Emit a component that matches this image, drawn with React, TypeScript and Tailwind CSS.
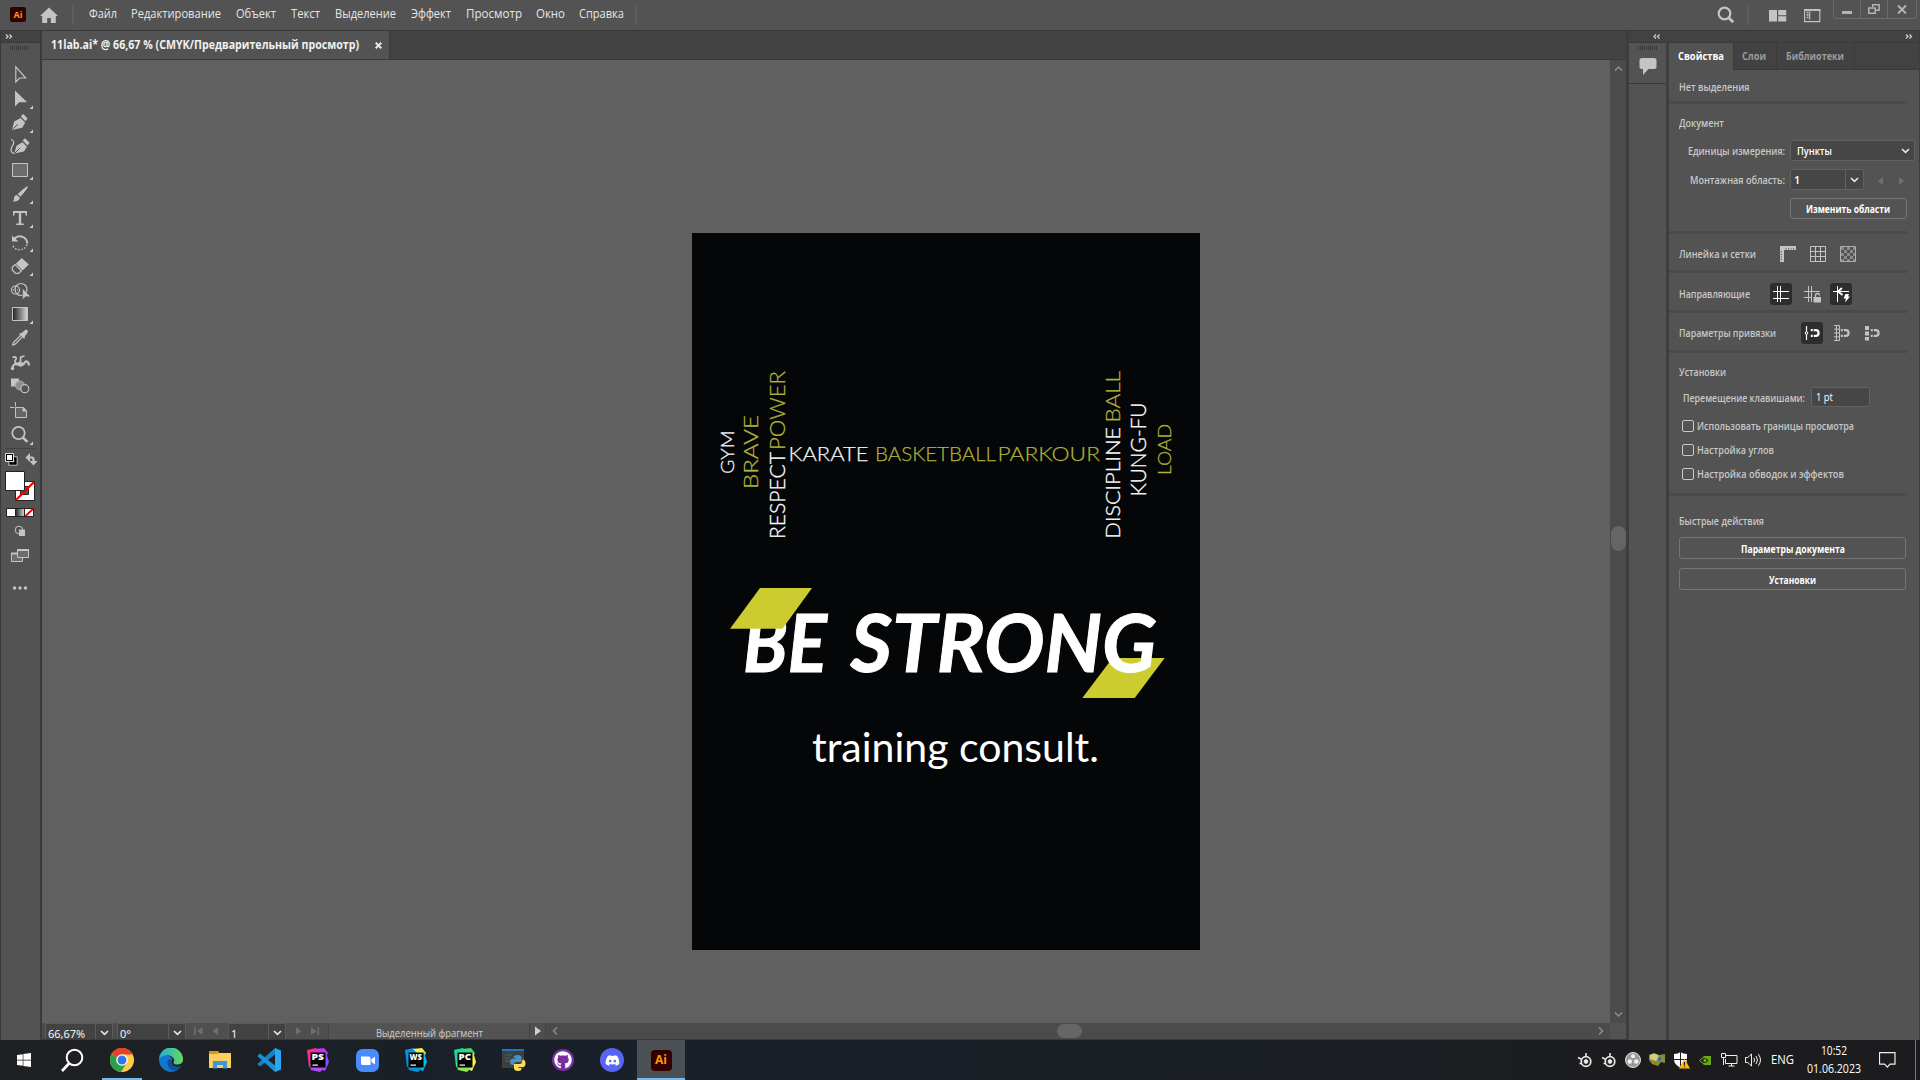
import { useLayoutEffect, useRef, useState } from "react";
import type { ReactNode } from "react";
import { FaDiscord, FaGithub, FaWindows } from "react-icons/fa";

/* Text squeezed or stretched to an exact width. */
function Fit({ w, children, className = "" }: { w: number; children: string; className?: string }) {
  const ref = useRef<HTMLSpanElement>(null);
  const [scale, setScale] = useState(1);
  useLayoutEffect(() => {
    const el = ref.current;
    if (el && el.offsetWidth) setScale(w / el.getBoundingClientRect().width);
  }, [w]);
  return (
    <span className={"block shrink-0 whitespace-nowrap " + className} style={{ width: w }}>
      <span ref={ref} className="inline-block origin-left" style={{ transform: `scaleX(${scale})` }}>
        {children}
      </span>
    </span>
  );
}

const Chevron = ({ className = "" }: { className?: string }) => (
  <svg width="9" height="6" viewBox="0 0 9 6" className={"shrink-0 " + className} fill="none" stroke="#e8e8e8" strokeWidth="1.6">
    <path d="M1 1l3.5 3.4L8 1" />
  </svg>
);

/* ---------- top menu ---------- */
const menu: [string, number, number][] = [
  ["Файл", 28, 0],
  ["Редактирование", 90, 14],
  ["Объект", 40, 15],
  ["Текст", 29, 15],
  ["Выделение", 61, 15],
  ["Эффект", 40, 15],
  ["Просмотр", 56, 15],
  ["Окно", 29, 14],
  ["Справка", 45, 14],
];

function MenuBar() {
  return (
    <header className="flex h-[31px] shrink-0 items-start border-b border-[#3a3a3a] bg-[#535353] text-[12.5px] text-[#e6e6e6]">
      <div className="ml-[10px] mt-[7px] flex h-[15px] w-4 items-center justify-center rounded-[2px] bg-[#330000] text-[9px] font-bold leading-none text-[#ff9a00]">
        Ai
      </div>
      <svg width="18" height="16" viewBox="0 0 18 16" className="ml-[14px] mt-[7px]" fill="#c4c4c4">
        <path d="M9 0.5L0 9h2.2v7h5v-5h3.6v5h5V9H18z" />
      </svg>
      <div className="ml-[14px] mt-[5px] h-5 w-[2px] bg-[#5e5e5e]" />
      <nav className="ml-[15px] flex h-[28px] items-center">
        {menu.map(([t, w, g]) => (
          <div key={t} className="flex">
            <span className="shrink-0" style={{ width: g }} />
            <Fit w={w}>{t}</Fit>
          </div>
        ))}
      </nav>
      <div className="ml-[11px] mt-[5px] h-5 w-[2px] bg-[#5e5e5e]" />
      <div className="flex-1" />
      <svg width="18" height="18" viewBox="0 0 18 18" className="mt-[6px]" fill="none" stroke="#c4c4c4">
        <circle cx="7.5" cy="7.5" r="5.8" strokeWidth="2.2" />
        <path d="M11.8 11.8l4.4 4.4" strokeWidth="2.8" />
      </svg>
      <div className="ml-[12px] mt-[5px] h-5 w-[2px] bg-[#5e5e5e]" />
      <svg width="18" height="12" viewBox="0 0 18 12" className="ml-[20px] mt-[10px]" fill="#c4c4c4">
        <path d="M0 0h8v11.5H0zM9.2 0h8v5.2h-8zM9.2 6.3h8v5.2h-8z" />
      </svg>
      <svg width="17" height="14" viewBox="0 0 17 14" className="ml-[17px] mt-[9px]" fill="none" stroke="#c4c4c4">
        <path d="M.6.6h15.2v12H.6zM5.7 2.5v8.3" strokeWidth="1.1" />
        <path d="M0 1h16.4" strokeWidth="1.8" />
        <path d="M2.6 3.4h2M2.6 5.9h2M2.6 8.4h2" strokeWidth="1.5" />
      </svg>
      <div className="ml-[12px] mr-[3px] flex h-[19px] w-[84px] rounded-b-[4px] border border-t-0 border-[#6b6b6b]">
        <div className="flex w-[27px] items-center justify-center border-r border-[#6b6b6b] pt-[7px]">
          <div className="h-[3px] w-[10px] bg-[#b4b4b4]" />
        </div>
        <div className="flex w-[27px] items-center justify-center border-r border-[#6b6b6b]">
          <svg width="12" height="10" viewBox="0 0 12 10" fill="none" stroke="#b4b4b4" strokeWidth="1.5">
            <path d="M4.7 3V.8h6.4v5.4H8M.8 4h6.4v5.2H.8z" />
          </svg>
        </div>
        <div className="flex flex-1 items-center justify-center">
          <svg width="10" height="9" viewBox="0 0 10 9" stroke="#b4b4b4" strokeWidth="2">
            <path d="M1 .5l8 8M9 .5l-8 8" />
          </svg>
        </div>
      </div>
    </header>
  );
}

/* ---------- left tools ---------- */
const C = "#c4c4c4";
const Corner = () => <path d="M33 18.5v3.500h-3.500z" fill="#d0d0d0" />;

const tools: { icon: ReactNode; more?: boolean }[] = [
  { icon: <path d="M15.8 3.800v15.200l3.800-4h6z" fill="none" stroke={C} strokeWidth="1.2" /> },
  { icon: <path d="M15 3.6v16l4.2-4.4h8z" />, more: true },
  {
    icon: (
      <>
        <path d="M12 19l2.2-8.5 6.4-3.6 4.6 4.8-3 5z" />
        <path d="M20.8 5.2L23.4 3l4.2 4.6-2.2 2.6z" />
        <path d="M12.5 18.4l5.2-5" stroke="#535353" />
      </>
    ),
    more: true,
  },
  {
    icon: (
      <>
        <path d="M14.3 18.6l2.2-7.8 6-3.6 4.4 4.6-3 4.8z" />
        <path d="M22.6 5.4L25 3.3l4.6 4.5-2.2 2.6z" />
        <path d="M14.8 18.2l5-5" stroke="#535353" />
        <path d="M11 4.2c3.4 1.4 3.2 4 1.6 6.4-2.4 3.6-2.6 6.8 1.8 8" fill="none" stroke={C} strokeWidth="1.2" />
      </>
    ),
  },
  { icon: <path d="M12.5 5.5h15v13h-15z" fill="#6c6c6c" stroke={C} />, more: true },
  {
    icon: (
      <>
        <path d="M27.8 4.2c1 .8-4.8 8-7.2 10.4l-3-2.4C20 9.600 27 3.400 27.800 4.200z" />
        <path d="M16.800 13l3 2.600c0 3-3.600 4.400-7 3.600 1.800-1 .8-2.800 1.600-4.600.5-1 1.400-1.500 2.400-1.600z" />
      </>
    ),
    more: true,
  },
  { icon: <path d="M13 5h14v4.500h-1.500V7h-4.300v10.400h2.600V19h-7.600v-1.600h2.600V7h-4.300v2.500H13z" />, more: true },
  {
    icon: (
      <>
        <path d="M14.500 8.500a7.500 7.500 0 0 1 12.800 5" fill="none" stroke={C} strokeWidth="2" />
        <path d="M12 5.500v6h6.400z" />
        <path d="M27 14.500c-1.500 6.500-12 7.500-14.600 0" fill="none" stroke={C} strokeWidth="1.500" strokeDasharray="1.500 1.700" />
      </>
    ),
    more: true,
  },
  {
    icon: (
      <>
        <path d="M21.800 4l7 6.600-6.200 6-6.800-6.800z" />
        <path d="M15 10.600l6.300 6.300-2.800 2.500h-3L12.300 16v-2.800z" fill="none" stroke={C} strokeWidth="1.300" />
      </>
    ),
    more: true,
  },
  {
    icon: (
      <>
        <circle cx="15.500" cy="12" r="4" fill="none" stroke={C} strokeWidth="1.200" />
        <circle cx="21" cy="11.500" r="6" fill="none" stroke={C} strokeWidth="1.200" />
        <path d="M13 12h8" stroke={C} strokeDasharray="1 1" />
        <path d="M22.600 10.500v11l3-2.800h5z" stroke="#535353" strokeWidth=".5" />
      </>
    ),
  },
  { icon: <path d="M12.500 5.500h15v13h-15z" fill="url(#tool-gradient)" stroke={C} />, more: true },
  {
    icon: (
      <>
        <path d="M20.500 8l4.300-3.800c2-1.500 4 .5 2.700 2.500L24 11.500z" />
        <path d="M19.800 7.500l4.800 4.600" stroke={C} strokeWidth="1.800" />
        <path d="M20.500 9.500l-7 7-.8 2.400 2.500-.8 7-7" fill="none" stroke={C} strokeWidth="1.300" />
      </>
    ),
  },
  {
    icon: (
      <>
        <path
          d="M12.500 18.500c0-4 2.500-5 5-4 2.500 1 6 1.500 7-1.500.8-2.600 4-2 4.500 2.500"
          fill="none"
          stroke={C}
          strokeWidth="2.200"
        />
        <path d="M15 14c3-1 3 3 7 2.500l2-4-5-.5z" />
        <path d="M12.500 7.500c3.500-1.500 4.500.5 3 2.500s0 3.500 2.500 3.500 3-3.500 2.500-5 1.500-2 4-2.500" fill="none" stroke={C} strokeWidth="1.700" />
        <circle cx="12.500" cy="18.500" r="1.700" />
      </>
    ),
  },
  {
    icon: (
      <>
        <path d="M11 4.500h8v8h-8z" />
        <circle cx="20" cy="11.500" r="4.500" fill="#8e8e8e" stroke="#aaa" />
        <circle cx="24.800" cy="14.700" r="4" fill="#535353" stroke={C} strokeWidth="1.200" />
      </>
    ),
  },
  {
    icon: (
      <>
        <path d="M10 8.500h4.500M15.500 3v4.500" stroke={C} fill="none" />
        <path d="M15.500 8.500h8l3 3v7h-11z" fill="#666" stroke={C} />
        <path d="M22.500 8l4.500 4.500h-4.500z" />
      </>
    ),
  },
  {
    icon: (
      <>
        <circle cx="18.500" cy="10" r="6.200" fill="none" stroke={C} strokeWidth="1.700" />
        <path d="M22.800 14.500l4.600 4.400" stroke={C} strokeWidth="2.600" />
      </>
    ),
    more: true,
  },
];

const Grip = ({ w }: { w: string }) => (
  <div className={"h-1 bg-[repeating-linear-gradient(90deg,#3a3a3a_0_1px,#535353_1px_2px)] " + w} />
);

function ToolPanel() {
  return (
    <aside className="flex w-[42px] shrink-0 flex-col border-x border-r-2 border-[#3a3a3a] bg-[#535353] text-[#c4c4c4]">
      <div className="flex h-3 shrink-0 items-center border-b border-[#3a3a3a] bg-[#424242] pl-1">
        <svg width="8" height="5" viewBox="0 0 8 5" fill="none" stroke="#d0d0d0" strokeWidth="1.300">
          <path d="M1 .5l2 2-2 2M4.500 .5l2 2-2 2" />
        </svg>
      </div>
      <div className="flex h-5 shrink-0 justify-start pl-[9px] pt-[3px]">
        <Grip w="w-5" />
      </div>
      <div className="flex flex-col">
        {tools.map((t, i) => (
          <svg key={i} width="38" height="24" viewBox={i > 3 && i < 14 ? "1 1 38 24" : "1 0 38 24"} fill={C}>
            {i === 10 && (
              <defs>
                <linearGradient id="tool-gradient">
                  <stop offset="0" stopColor="#222" />
                  <stop offset="1" stopColor="#d8d8d8" />
                </linearGradient>
              </defs>
            )}
            {t.icon}
            {t.more && <Corner />}
          </svg>
        ))}
      </div>
      <div className="ml-1 mt-[1px] h-px w-[30px] bg-[#444]" />
      <svg width="38" height="152" viewBox="1 449 38 152" fill={C}>
        <path d="M10.500 458.500h5v5h-5z" fill="none" stroke="#ddd" strokeWidth="4" />
        <path d="M10.500 458.500h5v5h-5z" fill="none" stroke="#000" strokeWidth="2.400" />
        <path d="M5.500 453.500h8v8h-8z" fill="#000" stroke="#ddd" strokeWidth="1" />
        <path d="M7 455h5v5H7z" fill="#fff" />
        <path d="M29 457.500h3q1.500 0 1.500 2v3" fill="none" stroke={C} strokeWidth="2.200" />
        <path d="M30 453v9l-4.500-4.500zM29.500 461h8l-4 4.500z" />
        <path d="M15.500 481.500h19v19h-19z" fill="#fff" stroke="#222" />
        <path d="M20.500 486.500h8v8h-8z" fill="#535353" stroke="#222" />
        <path d="M16 500L34 482" stroke="#f00000" strokeWidth="2.200" />
        <path d="M5.500 471.500h19v19h-19z" fill="#fff" stroke="#222" />
        <path d="M6.500 508.500h27v8h-27z" fill="#fff" stroke="#222" />
        <path d="M15.500 509h9v7h-9z" fill="url(#tool-gradient)" />
        <path d="M15.500 508.500v8M24.500 508.500v8" stroke="#222" />
        <path d="M25.500 516l7.500-7" stroke="#f00000" strokeWidth="1.800" />
        <circle cx="19" cy="530" r="3.800" fill="none" stroke={C} />
        <path d="M19 529.500h6v6.500h-6z" />
        <path d="M11.500 553.500h11v8h-11z" fill="#6c6c6c" stroke={C} />
        <path d="M17.500 549.500h11v8h-11z" fill="#6c6c6c" stroke={C} />
        <path d="M17 550h12M11 553.500h6" stroke={C} strokeWidth="2" />
        <circle cx="14.600" cy="588" r="1.700" />
        <circle cx="20" cy="588" r="1.700" />
        <circle cx="25.500" cy="588" r="1.700" />
      </svg>
    </aside>
  );
}

/* ---------- artwork ---------- */
type Word = { t: string; x: number; y: number; len: number; size: number; c: string };
const lime = "#b0b13a";
const vertical: Word[] = [
  { t: "GYM", x: 733.5, y: 474, len: 43.5, size: 17.3, c: "#f4f4f4" },
  { t: "BRAVE", x: 758, y: 489, len: 74, size: 20, c: lime },
  { t: "RESPECT", x: 785, y: 539, len: 87, size: 22, c: "#fff" },
  { t: "POWER", x: 785, y: 450, len: 79, size: 22, c: lime },
  { t: "DISCIPLINE", x: 1119.5, y: 538.5, len: 111.5, size: 20.5, c: "#fff" },
  { t: "BALL", x: 1119.5, y: 422.500, len: 51.5, size: 20.5, c: lime },
  { t: "KUNG-FU", x: 1145.5, y: 496.500, len: 94, size: 21.5, c: "#fff" },
  { t: "LOAD", x: 1170.5, y: 475, len: 51, size: 17.5, c: lime },
];
const horizontal: Word[] = [
  { t: "KARATE", x: 788.500, y: 460.7, len: 80, size: 20.5, c: "#f4f4f4" },
  { t: "BASKETBALL", x: 875, y: 460.7, len: 121, size: 20.5, c: lime },
  { t: "PARKOUR", x: 997.500, y: 460.7, len: 102.500, size: 20.5, c: lime },
];

function Artboard() {
  return (
    <svg width="508" height="717" viewBox="692 233 508 717" className="bg-[#040608]">
      <g fontFamily="Lato, sans-serif" fontWeight="300">
        {horizontal.map((w) => (
          <text key={w.t} x={w.x} y={w.y} fontSize={w.size} fill={w.c} stroke={w.c} strokeWidth=".25" textLength={w.len} lengthAdjust="spacingAndGlyphs">
            {w.t}
          </text>
        ))}
        {vertical.map((w) => (
          <text
            key={w.t}
            transform={`translate(${w.x} ${w.y}) rotate(-90)`}
            fontSize={w.size}
            fill={w.c}
            stroke={w.c}
            strokeWidth=".3"
            textLength={w.len}
            lengthAdjust="spacingAndGlyphs"
          >
            {w.t}
          </text>
        ))}
      </g>
      <path d="M1112.500 658h52.200l-30 40h-52.400z" fill="#cccb30" />
      <g fontFamily="Lato, sans-serif" fontWeight="700" fontStyle="italic" fontSize="80" fill="#fff" stroke="#fff" strokeWidth="1">
        <text x="743" y="672.300" textLength="84" lengthAdjust="spacingAndGlyphs">BE</text>
        <text x="850.500" y="672.300" textLength="306" lengthAdjust="spacingAndGlyphs">STRONG</text>
      </g>
      <path d="M760 588h52l-29.500 40.700H730z" fill="#cccb30" />
      <text x="812" y="762" fontFamily="Lato, sans-serif" fontSize="41" fill="#fff" textLength="287" lengthAdjust="spacingAndGlyphs">
        training consult.
      </text>
    </svg>
  );
}

const NavIcon = ({ d, c = "#6e6e6e" }: { d: string; c?: string }) => (
  <svg width="10" height="10" viewBox="0 0 10 10" fill={c} className="shrink-0">
    <path d={d} />
  </svg>
);

function StatusField({ v, w, gap }: { v: string; w: string; gap: string }) {
  return (
    <div className={"flex h-full shrink-0 border-l border-t border-[#5b5b5b] bg-[#424242] text-white " + gap}>
      <span className={"pl-[2px] " + w}>{v}</span>
      <span className="flex w-[18px] items-center justify-center border-x border-[#5b5b5b] pt-[3px]">
        <Chevron />
      </span>
    </div>
  );
}

function StatusBar() {
  return (
    <div className="flex h-[17px] shrink-0 overflow-hidden border-b border-[#3a3a3a] bg-[#4b4b4b] text-[11px] leading-[19px]">
      <StatusField v="66,67%" w="w-[49px]" gap="ml-[3px]" />
      <StatusField v="0°" w="w-[50px]" gap="ml-[4px]" />
      <div className="flex w-[42px] items-center justify-between bg-[#4f4f4f] pl-[8px] pr-[7px]">
        <NavIcon d="M0 1h1.500v8H0zM8.500 1v8L3 5z" />
        <NavIcon d="M7 1v8L1.500 5z" />
      </div>
      <StatusField v="1" w="w-[39px]" gap="" />
      <div className="flex w-[42px] items-center justify-between bg-[#4f4f4f] px-[8px]">
        <NavIcon d="M2 1v8l5.500-4z" />
        <NavIcon d="M1 1v8l5.500-4zM7.500 1H9v8H7.500z" />
      </div>
      <div className="w-[201px] border-l border-[#444] bg-[#535353] pl-[47px] text-[#cfcfcf]">
        <Fit w={107}>Выделенный фрагмент</Fit>
      </div>
      <div className="flex w-[17px] items-center justify-center border-x border-[#444] bg-[#4f4f4f]">
        <NavIcon d="M2 .5v9L8 5z" c="#d0d0d0" />
      </div>
      <div className="flex flex-1 items-center bg-[#4b4b4b] pl-[6px] pr-[6px]">
        <svg width="6" height="8" viewBox="0 0 6 8" fill="none" stroke="#8c8c8c" strokeWidth="1.500">
          <path d="M5 .5L1.500 4 5 7.500" />
        </svg>
        <div className="ml-[499px] h-[14px] w-[25px] rounded-full bg-[#656565]" />
        <div className="flex-1" />
        <svg width="6" height="8" viewBox="0 0 6 8" fill="none" stroke="#8c8c8c" strokeWidth="1.500">
          <path d="M1 .5L4.500 4 1 7.500" />
        </svg>
      </div>
    </div>
  );
}

function DocumentArea() {
  return (
    <main className="flex min-w-0 flex-1 flex-col">
      <div className="flex h-[29px] shrink-0 border-b border-[#3a3a3a] bg-[#424242]">
        <div className="flex w-[348px] items-center border-r border-[#3a3a3a] bg-[#535353] pl-[9px] text-[12px] font-bold text-[#f0f0f0]">
          <Fit w={308}>11lab.ai* @ 66,67 % (CMYK/Предварительный просмотр)</Fit>
          <svg width="7" height="7" viewBox="0 0 7 7" className="ml-4" stroke="#e8e8e8" strokeWidth="2">
            <path d="M.7.7l5.600 5.600M6.300.7L.7 6.300" />
          </svg>
        </div>
      </div>
      <div className="flex min-h-0 flex-1">
        <div className="flex w-[1568px] flex-col">
          <div className="min-h-0 flex-1 bg-[#606060] pl-[650px] pt-[173px]">
            <Artboard />
          </div>
          <StatusBar />
        </div>
        <div className="flex flex-1 flex-col items-center bg-[#4b4b4b] pt-[6px]">
          <svg width="9" height="5" viewBox="0 0 9 5" fill="none" stroke="#8c8c8c" strokeWidth="1.500">
            <path d="M1 4.500l3.500-3.500L8 4.500" />
          </svg>
          <div className="mt-[455px] h-[25px] w-[15px] rounded-full bg-[#656565]" />
          <div className="flex-1" />
          <svg width="9" height="5" viewBox="0 0 9 5" fill="none" stroke="#8c8c8c" strokeWidth="1.500">
            <path d="M1 .5L4.500 4 8 .5" />
          </svg>
          <div className="mt-[6px] h-[17px] w-full border-b border-[#3a3a3a] bg-[#535353]" />
        </div>
      </div>
    </main>
  );
}

/* ---------- properties ---------- */
const Rule = () => <div className="h-[3px] w-[238px] shrink-0 bg-[#4a4a4a]" />;
const IconBtn = ({ on, children, className = "" }: { on?: boolean; children: ReactNode; className?: string }) => (
  <div className={"flex size-[22px] shrink-0 items-center justify-center rounded-[3px] " + (on ? "bg-[#2d2d2d] " : "") + className}>
    {children}
  </div>
);
const Magnet = ({ c }: { c: string }) => (
  <g fill="none" stroke={c} strokeWidth="2.200">
    <path d="M9.800 5.200h2a2.700 2.700 0 0 1 0 5.600h-2" />
    <path d="M6.800 5.200h2M6.800 10.800h2" />
  </g>
);
const Check = ({ w, label }: { w: number; label: string }) => (
  <div className="mb-[11px] ml-[13px] flex h-[13px] items-center gap-[3px]">
    <span className="size-3 rounded-[2px] border border-[#c8c8c8]" />
    <Fit w={w} className="pt-px">{label}</Fit>
  </div>
);
const WideButton = ({ w, label }: { w: number; label: string }) => (
  <div className="mb-[9px] ml-[10px] flex h-[22px] w-[227px] items-center justify-center rounded-[3px] border border-[#757575] pt-[2px] font-bold text-white">
    <Fit w={w}>{label}</Fit>
  </div>
);

function Properties() {
  return (
    <section className="flex w-[250px] flex-col text-[11px] font-semibold leading-[14px] text-[#c8c8c8]">
      <div className="flex h-[27px] shrink-0 bg-[#424242] font-bold text-[#9c9c9c]">
        <div className="flex w-[65px] items-center border-r border-[#3a3a3a] bg-[#535353] pb-[2px] pl-[9px] text-white">
          <Fit w={46}>Свойства</Fit>
        </div>
        <div className="flex w-[43px] items-center border-b border-r border-[#3a3a3a] pb-px pl-[8px]">
          <Fit w={24}>Слои</Fit>
        </div>
        <div className="flex w-[78px] items-center border-b border-r border-[#3a3a3a] pb-px pl-[9px]">
          <Fit w={58}>Библиотеки</Fit>
        </div>
        <div className="flex-1 border-b border-[#3a3a3a]" />
      </div>
      <div className="flex h-[31px] items-center pl-[10px] pt-[3px]">
        <Fit w={70.5}>Нет выделения</Fit>
      </div>
      <Rule />
      <div className="flex h-[36px] items-center pl-[10px] pt-px">
        <Fit w={45}>Документ</Fit>
      </div>
      <div className="flex h-[21px] items-center pl-[19px]">
        <Fit w={97}>Единицы измерения:</Fit>
        <div className="ml-[5px] flex h-[21px] w-[125px] items-center justify-between rounded-[2px] border border-[#626262] bg-[#464646] pl-[6px] pr-[4px] pt-px text-white">
          <Fit w={35}>Пункты</Fit>
          <Chevron />
        </div>
      </div>
      <div className="mt-2 flex h-[21px] items-center pl-[21px]">
        <Fit w={95}>Монтажная область:</Fit>
        <div className="ml-[5px] flex h-[21px] w-[74px] items-center rounded-[2px] border border-[#626262] bg-[#464646] text-white">
          <span className="flex-1 pl-[3px]">1</span>
          <span className="flex h-full w-[18px] items-center justify-center border-l border-[#626262]">
            <Chevron />
          </span>
        </div>
        <svg width="26" height="10" viewBox="0 0 26 10" className="ml-[14px] mt-[2px]" fill="#707070">
          <path d="M5 1v8L0 5zM21 1v8l5-4z" />
        </svg>
      </div>
      <div className="ml-[121px] mt-2 flex h-[21px] w-[117px] items-center justify-center rounded-[3px] border border-[#757575] pr-px pt-px font-bold text-white">
        <Fit w={84}>Изменить области</Fit>
      </div>
      <div className="h-3" />
      <Rule />
      <div className="flex h-[36px] items-center pl-[10px] pt-[4px]">
        <Fit w={77}>Линейка и сетки</Fit>
        <svg width="16" height="16" viewBox="0 0 16 16" className="ml-[24px]" fill={C}>
          <path d="M0 0h16v4H4v12H0z" />
          <path d="M5.500 2.800h10M1.300 5.500v10" stroke="#535353" strokeDasharray="1 1.500" strokeWidth="1.200" />
        </svg>
        <svg width="16" height="16" viewBox="0 0 16 16" className="ml-[14px]" fill="none" stroke={C}>
          <path d="M.5.5h15v15H.5zM5.500.5v15M10.500.5v15M.5 5.500h15M.5 10.500h15" />
        </svg>
        <svg width="16" height="16" viewBox="0 0 16 16" className="ml-[14px]" fill="#8a8a8a">
          <path d="M.5.5h15v15H.5z" fill="none" stroke="#b0b0b0" />
          <path d="M1 1h3v3H1zM7 1h3v3H7zM4 4h3v3H4zM10 4h3v3h-3zM1 7h3v3H1zM7 7h3v3H7zM13 1h2v3h-2zM13 7h2v3h-2zM4 10h3v3H4zM10 10h3v3h-3zM1 13h3v2H1zM7 13h3v2H7zM13 13h2v2h-2z" />
        </svg>
      </div>
      <Rule />
      <div className="flex h-[37px] items-center pl-[10px] pt-1">
        <Fit w={71} className="pt-px">Направляющие</Fit>
        <IconBtn on className="ml-[20px]">
          <svg width="16" height="16" viewBox="0 0 16 16" stroke="#fff">
            <path d="M4.500 0v16M7.500 0v16M0 5.500h16M0 12.500h16" />
          </svg>
        </IconBtn>
        <IconBtn className="ml-[9px]">
          <svg width="18" height="18" viewBox="0 0 18 18" stroke={C} fill="none">
            <path d="M5.500 1v16M8.500 1v16M1 6.500h16M1 12.500h8" />
            <path d="M10.500 12h7.500v5.500h-7.500z" fill={C} stroke="none" />
            <path d="M12.500 12V10.500a2 2 0 0 1 4 0" stroke="#535353" strokeWidth="3" />
            <path d="M12.500 12V10.500a2 2 0 0 1 4 0" strokeWidth="1.300" />
          </svg>
        </IconBtn>
        <IconBtn on className="ml-[7px]">
          <svg width="18" height="18" viewBox="0 0 18 18" stroke="#fff" fill="none">
            <path d="M5.500 1v16M1 6.500h16" />
            <path d="M6 6.500l4.500 3.500M6 6.500L10 3" strokeWidth="1.800" />
            <path d="M13.500 9h3.500l-1 2.500h2l-5 6 1-4h-2.500z" fill="#fff" stroke="none" />
          </svg>
        </IconBtn>
      </div>
      <Rule />
      <div className="flex h-[37px] items-center pl-[10px] pt-[3px]">
        <Fit w={97}>Параметры привязки</Fit>
        <IconBtn on className="ml-[25px]">
          <svg width="16" height="16" viewBox="0 0 16 16" fill="none" stroke="#fff">
            <path d="M2.500 1v14" strokeWidth="1.200" />
            <circle cx="2.500" cy="8" r="1.300" fill="#2d2d2d" />
            <Magnet c="#fff" />
          </svg>
        </IconBtn>
        <IconBtn className="ml-[8px]">
          <svg width="16" height="16" viewBox="0 0 16 16" fill="none" stroke={C}>
            <path d="M2 .5h3.500v15H2M0 .5h2M0 4.200h5.500M0 8h5.500M0 11.800h5.500M0 15.500h2M2.500 0v16" strokeWidth="1" />
            <Magnet c={C} />
          </svg>
        </IconBtn>
        <IconBtn className="ml-[8px]">
          <svg width="16" height="16" viewBox="0 0 16 16" fill={C}>
            <path d="M1 1h4v4H1zM1 6.500h4v4H1zM1 12h4v3.500H1z" />
            <Magnet c={C} />
          </svg>
        </IconBtn>
      </div>
      <Rule />
      <div className="flex h-[34px] items-center pl-[10px] pt-[3px]">
        <Fit w={47}>Установки</Fit>
      </div>
      <div className="flex h-5 items-center pl-[14px]">
        <Fit w={122} className="pt-px">Перемещение клавишами:</Fit>
        <div className="ml-[6px] flex h-[20px] w-[59px] items-center rounded-[2px] border border-[#626262] bg-[#464646] pl-[4px] font-medium text-white">
          <Fit w={17}>1 pt</Fit>
        </div>
      </div>
      <div className="h-3" />
      <Check w={157} label="Использовать границы просмотра" />
      <Check w={77} label="Настройка углов" />
      <Check w={147} label="Настройка обводок и эффектов" />
      <div className="h-[2px]" />
      <Rule />
      <div className="flex h-[41px] items-center pl-[10px] pt-[8px]">
        <Fit w={85}>Быстрые действия</Fit>
      </div>
      <WideButton w={104} label="Параметры документа" />
      <WideButton w={47} label="Установки" />
    </section>
  );
}

function RightDock() {
  return (
    <aside className="flex w-[294px] shrink-0 flex-col border-l-[3px] border-r border-[#3d3d3d] bg-[#535353]">
      <div className="flex h-3 shrink-0 items-center border-b border-[#3a3a3a] bg-[#424242] pl-[24px] pr-[6px]">
        <svg width="8" height="5" viewBox="0 0 8 5" fill="none" stroke="#d0d0d0" strokeWidth="1.300">
          <path d="M3 .5l-2 2 2 2M6.500 .5l-2 2 2 2" />
        </svg>
        <div className="flex-1" />
        <svg width="8" height="5" viewBox="0 0 8 5" fill="none" stroke="#d0d0d0" strokeWidth="1.300">
          <path d="M1 .5l2 2-2 2M4.500 .5l2 2-2 2" />
        </svg>
      </div>
      <div className="flex flex-1">
        <div className="w-10 border-r-[3px] border-[#3f3f3f]">
          <div className="flex h-[41px] flex-col items-center border-b border-[#3a3a3a] pt-[3px]">
            <Grip w="w-[19px]" />
            <svg width="18" height="18" viewBox="0 0 18 18" className="ml-px mt-[8px]" fill={C}>
              <path d="M3 0h12q2.500 0 2.500 2.500v6q0 2.500-2.500 2.500H9.500L4 17v-6H3Q.5 11 .5 8.500v-6Q.5 0 3 0z" />
            </svg>
          </div>
        </div>
        <Properties />
      </div>
    </aside>
  );
}

/* ---------- taskbar ---------- */
const JetBrains = ({ t, a, b, c, d }: { t: string; a: string; b: string; c: string; d: string }) => (
  <svg width="24" height="24" viewBox="0 0 24 24">
    <path d="M1 2l9-2 6 7-8 14-5-2z" fill={a} />
    <path d="M9 1l9-1 4 5-3 6z" fill={b} />
    <path d="M20 4l3 10-4 9-9-4z" fill={c} />
    <path d="M3 15l2 7 9 2 6-6z" fill={d} />
    <path d="M4.500 4.500h15v15h-15z" fill="#000" />
    <path d="M6.500 16.500h5.500v1.200H6.500z" fill="#fff" />
    <text x="5.500" y="12" fontSize="8" fontWeight="800" fill="#fff" fontFamily="Open Sans, sans-serif" textLength="12.500" lengthAdjust="spacingAndGlyphs">{t}</text>
  </svg>
);

const apps: { icon: ReactNode; state?: "run" | "active" }[] = [
  { icon: <FaWindows className="size-4 text-white" /> },
  {
    icon: (
      <svg width="24" height="24" viewBox="0 0 24 24" fill="none" stroke="#fff" strokeWidth="2">
        <circle cx="13.500" cy="9.500" r="7.800" />
        <path d="M8 15.500L1 23" strokeWidth="2.600" />
      </svg>
    ),
  },
  {
    icon: (
      <svg width="24" height="24" viewBox="0 0 24 24">
        <circle cx="12" cy="12" r="12" fill="#fc4" />
        <path d="M12 12L1.600 6A12 12 0 0 0 11 24l5.800-9.500z" fill="#2b9f4a" />
        <path d="M12 12L1.600 6a12 12 0 0 1 21.200.5H12z" fill="#e3402f" />
        <circle cx="12" cy="12" r="5.800" fill="#fff" />
        <circle cx="12" cy="12" r="4.500" fill="#3478e8" />
      </svg>
    ),
    state: "run",
  },
  {
    icon: (
      <svg width="24" height="24" viewBox="0 0 24 24">
        <defs>
          <linearGradient id="edge-top">
            <stop offset="0" stopColor="#2aa9dc" />
            <stop offset="1" stopColor="#5fdc5c" />
          </linearGradient>
        </defs>
        <path d="M0 12a12 12 0 0 1 24-1c.5 4-3 6-7 5.500-2-.3-3-1.500-2-3C16 11 13 7 8 7.500 4 8 1 10 0 12z" fill="url(#edge-top)" />
        <path d="M0 12C1 8.500 5 7 8.500 7.500c3.500.5 5 3 4.800 4.500-2 1-3 7 5 7 2 0 3-.5 4-1A12 12 0 0 1 0 12z" fill="#1277cf" />
        <path d="M8.500 13c-1 5 3 10.500 9 9.500 2-1 4-2.800 4.700-4.400-3 1.400-9 1-9.500-4 0-1 .4-1.700.7-2.100-1.500-1.500-4.500-1-4.900 1z" fill="#124f97" />
      </svg>
    ),
  },
  {
    icon: (
      <svg width="22" height="20" viewBox="0 0 22 20">
        <path d="M0 1h9l1 2h12v15H0z" fill="#fbcf5e" />
        <path d="M0 1h9l1 2-1 1H0z" fill="#d99a13" />
        <path d="M4 18.500V11h14v7.500h-4V15H8v3.500z" fill="#3a96dd" />
      </svg>
    ),
  },
  {
    icon: (
      <svg width="24" height="24" viewBox="0 0 24 24">
        <path d="M18 0l6 2.500v19L18 24z" fill="#2aa7f0" />
        <path d="M18 0v6.500L3 18.500l-2.700-2.400z" fill="#1583c7" />
        <path d="M18 24v-6.500L3 5.500.3 7.900z" fill="#1b91da" />
      </svg>
    ),
  },
  { icon: <JetBrains t="PS" a="#fb2d8a" b="#c336f5" c="#8a4bff" d="#b449f5" /> },
  {
    icon: (
      <svg width="23" height="23" viewBox="0 0 23 23">
        <rect width="23" height="23" rx="6.500" fill="#4a8cff" />
        <path d="M5 7.500h8q1.500 0 1.500 1.500v7h-8Q5 16 5 14.500zM15.300 10.300l3.700-2.500v7.700l-3.700-2.500z" fill="#fff" />
      </svg>
    ),
  },
  { icon: <JetBrains t="WS" a="#0793e8" b="#f4f04e" c="#08bcf0" d="#0794e6" /> },
  { icon: <JetBrains t="PC" a="#22d88f" b="#3bd67b" c="#fcf84a" d="#8ae657" /> },
  {
    icon: (
      <svg width="24" height="24" viewBox="0 0 24 24">
        <path d="M0 1h22v19H0z" fill="#3c4043" />
        <path d="M0 1h22v2H0z" fill="#1e76c5" />
        <path d="M3 7h7M3 10h5M3 13h7" stroke="#3e6f3e" strokeWidth="1.200" />
        <path d="M11.500 9.500q0-2.500 4-2.500t4 2.500V14h-5q-2.500 0-2.500 3-4 .5-4-3t3-3.500h4z" fill="#4f8fc4" />
        <path d="M20.500 11.500q3 .3 3 4t-3 3.500h-4v1h3q.5 3-3.500 3t-4-3v-4h6q2 0 2.500-4.500z" fill="#ffde57" />
      </svg>
    ),
  },
  {
    icon: (
      <span className="flex size-[22px] items-center justify-center rounded-full bg-[#7b2f9e]">
        <FaGithub className="size-[18px] text-white" />
      </span>
    ),
  },
  {
    icon: (
      <span className="flex size-6 items-center justify-center rounded-full bg-[#5865f2]">
        <FaDiscord className="size-[15px] text-white" />
      </span>
    ),
  },
  {
    icon: (
      <span className="flex size-[21px] items-center justify-center rounded-[4px] bg-[#330000] text-[12px] font-bold leading-none text-[#ff9a00]">
        Ai
      </span>
    ),
    state: "active",
  },
];

const Steel = () => (
  <svg width="16" height="16" viewBox="0 0 16 16" fill="none" stroke="#e6e6e6">
    <circle cx="9" cy="9.500" r="4.800" strokeWidth="1.700" />
    <circle cx="9" cy="9.500" r="1.900" fill="#e6e6e6" />
    <path d="M1 5.500l4 2M9 1v3M2.500 11.500h2.500" strokeWidth="1.600" />
  </svg>
);

const tray: ReactNode[] = [
  <Steel />,
  <Steel />,
  <svg width="16" height="16" viewBox="0 0 16 16">
    <circle cx="8" cy="8" r="7.500" fill="#9a9a9a" stroke="#e0e0e0" />
    <g fill="#f2f2f2">
      <circle cx="8" cy="4.300" r="2" />
      <circle cx="4.800" cy="9.500" r="2.200" />
      <circle cx="11.200" cy="9.500" r="2.200" />
    </g>
  </svg>,
  <svg width="17" height="14" viewBox="0 0 17 14">
    <path d="M0 2l5-2 5 2 6-1v9l-4-1-3 4-6-2-3-4z" fill="#8f8b32" />
    <path d="M1 2l4-1.500L9 2l1 3-3 3-6-2z" fill="#d2cf78" />
    <circle cx="10.500" cy="6" r="2" fill="#2176c0" />
  </svg>,
  <svg width="17" height="17" viewBox="0 0 17 17">
    <path d="M1 2q4 0 6.500-2Q10 2 14 2v5q0 6-6.500 8.500Q1 13 1 7z" fill="#fff" />
    <path d="M7.500 0v15M1 7.500h13" stroke="#1c1c1e" />
    <path d="M11.500 6.500l5.500 10H6z" fill="#fdb813" />
    <path d="M11.500 10v3.500M11.500 14.500v1" stroke="#222" strokeWidth="1.200" />
  </svg>,
  <svg width="12" height="9" viewBox="0 0 12 9">
    <path d="M4.500 0H12v9H4.500z" fill="#69a81c" />
    <path d="M.5 4.500Q3 1 6 1.500t4 3Q8 8 5 7.500t-4.500-3z" fill="#1e3a16" stroke="#76b900" strokeWidth=".9" />
    <circle cx="6" cy="4.500" r="1.400" fill="#76b900" />
  </svg>,
  <svg width="17" height="14" viewBox="0 0 17 14" fill="none" stroke="#f0f0f0">
    <path d="M5 2.500h11v8H4.500V6M10.500 10.500v2.500M7.500 13h6" />
    <path d="M.5.500h4v4h-4zM2.500 4.500V12" />
  </svg>,
  <svg width="17" height="14" viewBox="0 0 17 14" fill="none" stroke="#f0f0f0">
    <path d="M.5 4.500h2.300L6.500 1v12L2.800 9.500H.5zM8.800 4.800q1.500 2.200 0 4.400M11 3q3 4 0 8M13.300 1.200q4.400 5.800 0 11.600" />
  </svg>,
];

function Taskbar() {
  return (
    <footer className="flex h-10 shrink-0 bg-[linear-gradient(90deg,#1f2022_0%,#19202a_30%,#1b1f24_70%,#1c1c1e_85%)] text-white">
      <div className="flex gap-px">
        {apps.map((a, i) => (
          <div key={i} className={"flex w-12 flex-col items-center " + (a.state === "active" ? "bg-[#4b5055]" : "")}>
            <div className="flex h-[38px] items-center justify-center pt-[2px]">{a.icon}</div>
            {a.state && <div className={"h-[2px] bg-[#76b9ed] " + (a.state === "run" ? "w-10" : "w-12")} />}
            {i === 0 && <div className="w-[49px]" />}
          </div>
        ))}
      </div>
      <div className="flex-1" />
      <div className="flex items-center">
        {tray.map((t, i) => (
          <div key={i} className="flex w-6 justify-center">{t}</div>
        ))}
      </div>
      <div className="ml-[6px] flex items-center text-[12.5px]">
        <Fit w={23}>ENG</Fit>
      </div>
      <div className="ml-[12px] flex w-[56px] flex-col items-center pt-[2px] text-[12px] leading-[18px]">
        <Fit w={26}>10:52</Fit>
        <Fit w={54}>01.06.2023</Fit>
      </div>
      <svg width="17" height="17" viewBox="0 0 17 17" className="ml-[17px] mt-[12px]" fill="none" stroke="#f0f0f0">
        <path d="M.5.700h15.500v11.500h-5l-2.700 3-2.700-3H.5z" strokeWidth="1.200" />
      </svg>
      <div className="ml-[19px] mr-1 w-px bg-[#7a7a7a]" />
    </footer>
  );
}

export default function App() {
  return (
    <div className="flex h-[1080px] w-[1920px] flex-col overflow-hidden bg-[#535353] font-['Open_Sans','Noto_Sans',sans-serif]">
      <MenuBar />
      <div className="flex min-h-0 flex-1">
        <ToolPanel />
        <DocumentArea />
        <RightDock />
      </div>
      <Taskbar />
    </div>
  );
}
